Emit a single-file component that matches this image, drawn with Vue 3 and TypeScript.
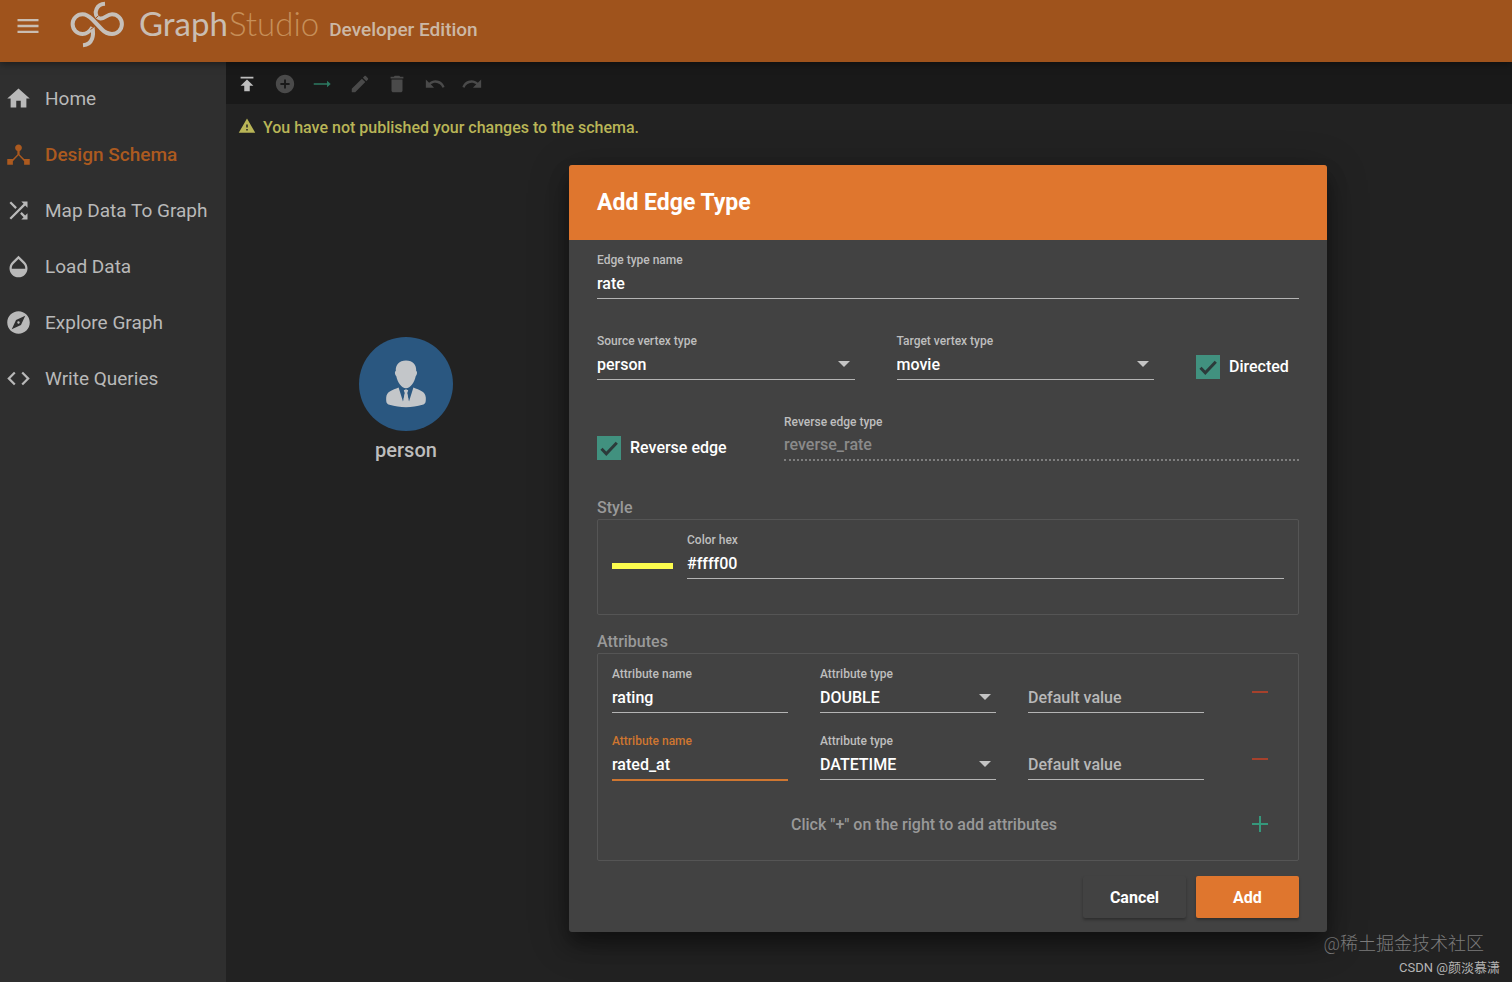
<script setup lang="ts">
import { ref } from 'vue'

interface NavItem {
  label: string
  path: string
}

interface Tool {
  label: string
  path: string
  tone?: 'bright' | 'green'
}

interface Attribute {
  name: string
  type: string
  defaultValue: string
}

const navItems: NavItem[] = [
  { label: 'Home', path: 'M10 20v-6h4v6h5v-8h3L12 3 2 12h3v8z' },
  {
    label: 'Design Schema',
    path: 'M17 16l-4-4V8.82C14.16 8.4 15 7.3 15 6c0-1.66-1.34-3-3-3S9 4.34 9 6c0 1.3.84 2.4 2 2.82V12l-4 4H2v5h5v-3.05l5-5.2 5 5.2V21h5v-5z',
  },
  {
    label: 'Map Data To Graph',
    path: 'M10.59 9.17L5.41 4 4 5.41l5.17 5.17 1.42-1.41zM14.5 4l2.04 2.04L4 18.59 5.41 20 17.96 7.46 20 9.5V4h-5.5zm.33 9.41l-1.41 1.41 3.13 3.13L14.5 20H20v-5.5l-2.04 2.04-3.13-3.13z',
  },
  {
    label: 'Load Data',
    path: 'M17.66 8L12 2.35 6.34 8C4.78 9.56 4 11.64 4 13.64s.78 4.11 2.34 5.67 3.61 2.35 5.66 2.35 4.1-.79 5.66-2.35S20 15.64 20 13.64 19.22 9.56 17.66 8zM6 14c.01-2 .62-3.27 1.76-4.4L12 5.27l4.24 4.38C17.38 10.77 17.99 12 18 14H6z',
  },
  {
    label: 'Explore Graph',
    path: 'M12 10.9c-.61 0-1.1.49-1.1 1.1s.49 1.1 1.1 1.1c.61 0 1.1-.49 1.1-1.1s-.49-1.1-1.1-1.1zM12 2C6.48 2 2 6.48 2 12s4.48 10 10 10 10-4.48 10-10S17.52 2 12 2zm2.19 12.19L6 18l3.81-8.19L18 6l-3.81 8.19z',
  },
  {
    label: 'Write Queries',
    path: 'M9.4 16.6L4.8 12l4.6-4.6L8 6l-6 6 6 6 1.4-1.4zm5.2 0l4.6-4.6-4.6-4.6L16 6l6 6-6 6-1.4-1.4z',
  },
]

const tools: Tool[] = [
  { label: 'Publish schema', tone: 'bright', path: 'M5 4v2h14V4H5zm0 10h4v6h6v-6h4l-7-7-7 7z' },
  {
    label: 'Add vertex type',
    path: 'M12 2C6.48 2 2 6.48 2 12s4.48 10 10 10 10-4.48 10-10S17.52 2 12 2zm5 11h-4v4h-2v-4H7v-2h4V7h2v4h4v2z',
  },
  { label: 'Add edge type', tone: 'green', path: 'M3 11.2h14.5V8.5L21.5 12l-4 3.5v-2.7H3z' },
  {
    label: 'Edit',
    path: 'M3 17.25V21h3.75L17.81 9.94l-3.75-3.75L3 17.25zM20.71 7.04c.39-.39.39-1.02 0-1.41l-2.34-2.34c-.39-.39-1.02-.39-1.41 0l-1.83 1.83 3.75 3.75 1.83-1.83z',
  },
  { label: 'Delete', path: 'M6 19c0 1.1.9 2 2 2h8c1.1 0 2-.9 2-2V7H6v12zM19 4h-3.5l-1-1h-5l-1 1H5v2h14V4z' },
  {
    label: 'Undo',
    path: 'M12.5 8c-2.65 0-5.05.99-6.9 2.6L2 7v9h9l-3.62-3.62c1.39-1.16 3.16-1.88 5.12-1.88 3.54 0 6.55 2.31 7.6 5.5l2.37-.78C21.08 11.03 17.15 8 12.5 8z',
  },
  {
    label: 'Redo',
    path: 'M18.4 10.6C16.55 8.99 14.15 8 11.5 8c-4.65 0-8.58 3.03-9.96 7.22L3.9 16c1.05-3.19 4.05-5.5 7.6-5.5 1.95 0 3.73.72 5.12 1.88L13 16h9V7l-3.6 3.6z',
  },
]

const activeNav = ref('Design Schema')
const edgeName = ref('rate')
const source = ref('person')
const target = ref('movie')
const directed = ref(true)
const reverseEdge = ref(true)
const reverseName = ref('reverse_rate')
const colorHex = ref('#ffff00')
const focusedRow = ref(1)

const vertexTypes = ['person', 'movie']
const attributeTypes = ['DOUBLE', 'DATETIME', 'INT', 'STRING']

const attributes = ref<Attribute[]>([
  { name: 'rating', type: 'DOUBLE', defaultValue: '' },
  { name: 'rated_at', type: 'DATETIME', defaultValue: '' },
])

function addAttribute() {
  attributes.value.push({ name: '', type: 'STRING', defaultValue: '' })
}

function removeAttribute(index: number) {
  attributes.value.splice(index, 1)
}
</script>

<template>
  <div class="app">
    <header class="topbar">
      <button class="icon-button menu" type="button" aria-label="Menu">
        <svg viewBox="0 0 24 24"><path d="M3 18h18v-2H3v2zm0-5h18v-2H3v2zm0-7v2h18V6H3z" /></svg>
      </button>
      <svg class="logo" viewBox="0 0 68 52" aria-hidden="true">
        <path d="M28.4 27.2C26 31 22.8 34 18.5 34A9.9 9.9 0 1 1 18.5 14.2C22.5 14.2 25.5 16.5 28.5 19.5L37.5 29C40.5 32.2 43.8 34 48 34A9.9 9.9 0 1 0 48 14.2C43 14.2 40.5 19 36.5 18.6C31.5 17.8 30.8 12.5 32.6 8.8C34.2 5.5 37 4 41 3.8" />
        <path d="M28.4 27.2C30 34.5 29 44.6 19 45.2" />
        <path class="logo-gap" d="M26.5 29.5L30.5 26.5M31.2 18.6L34.6 15.6" />
      </svg>
      <div class="brand">
        <span class="brand-main">Graph</span><span class="brand-thin">Studio</span>
        <span class="edition">Developer Edition</span>
      </div>
    </header>

    <div class="workspace">
      <nav class="sidebar">
        <a
          v-for="item in navItems"
          :key="item.label"
          href="#"
          class="nav-item"
          :class="{ active: item.label === activeNav }"
          @click.prevent="activeNav = item.label"
        >
          <svg viewBox="0 0 24 24"><path :d="item.path" /></svg>
          <span>{{ item.label }}</span>
        </a>
      </nav>

      <main class="main">
        <div class="toolbar">
          <div class="tools">
            <button
              v-for="tool in tools"
              :key="tool.label"
              type="button"
              class="icon-button tool"
              :class="tool.tone"
              :aria-label="tool.label"
            >
              <svg viewBox="0 0 24 24"><path :d="tool.path" /></svg>
            </button>
          </div>
        </div>

        <section class="canvas">
          <p class="warning">
            <svg viewBox="0 0 24 24"><path d="M1 21h22L12 2 1 21zm12-3h-2v-2h2v2zm0-4h-2v-4h2v4z" /></svg>
            <span>You have not published your changes to the schema.</span>
          </p>
          <div class="vertex">
            <svg viewBox="0 0 94 94">
              <circle cx="47" cy="47" r="47" fill="#2a5780" />
              <path
                fill="#c3c6c9"
                d="M47 23.500c7 0 10.500 4.300 10.200 10.500 1.300.3 1.100 3.600-.5 5.200-1.300 6.300-5.200 12-9.700 12s-8.400-5.700-9.700-12c-1.600-1.600-1.800-4.900-.5-5.200C36.500 27.800 40 23.500 47 23.500z"
              />
              <path
                fill="#c3c6c9"
                d="M39.600 50.500L44 64.500 45.800 56 44.800 53.200 47 52.200 49.200 53.200 48.200 56 50 64.500 54.400 50.500C60.500 53 66.500 54.500 66.800 60.500C67 65.500 66.500 66.800 63.500 67.800C53 71 41 71 30.500 67.800C27.500 66.800 27 65.500 27.200 60.500C27.500 54.500 33.500 53 39.600 50.500z"
              />
              <path fill="#c3c6c9" d="M45.300 53h3.400l-.7 3 1.300 6L47 66l-2.300-4 1.300-6z" />
            </svg>
            <span>person</span>
          </div>
        </section>
      </main>
    </div>

    <form class="dialog" role="dialog" aria-labelledby="dialog-title" @submit.prevent>
      <h2 id="dialog-title" class="dialog-title">Add Edge Type</h2>

      <div class="dialog-body">
        <div class="field">
          <label for="edge-name">Edge type name</label>
          <input id="edge-name" v-model="edgeName" type="text" />
        </div>

        <div class="row endpoints">
          <div class="field">
            <label for="source-type">Source vertex type</label>
            <div class="select">
              <select id="source-type" v-model="source">
                <option v-for="v in vertexTypes" :key="v">{{ v }}</option>
              </select>
              <svg viewBox="0 0 12 6"><path d="M0 0h12L6 6z" /></svg>
            </div>
          </div>
          <div class="field">
            <label for="target-type">Target vertex type</label>
            <div class="select">
              <select id="target-type" v-model="target">
                <option v-for="v in vertexTypes" :key="v">{{ v }}</option>
              </select>
              <svg viewBox="0 0 12 6"><path d="M0 0h12L6 6z" /></svg>
            </div>
          </div>
          <label class="check">
            <span class="box">
              <input v-model="directed" type="checkbox" />
              <svg v-if="directed" viewBox="0 0 24 24"><path d="M4.500 12.800L9.300 17.800 19.800 6.800" /></svg>
            </span>
            Directed
          </label>
        </div>

        <div class="row reverse">
          <label class="check">
            <span class="box">
              <input v-model="reverseEdge" type="checkbox" />
              <svg v-if="reverseEdge" viewBox="0 0 24 24"><path d="M4.500 12.800L9.300 17.800 19.800 6.800" /></svg>
            </span>
            Reverse edge
          </label>
          <div class="field disabled">
            <label for="reverse-name">Reverse edge type</label>
            <input id="reverse-name" v-model="reverseName" type="text" disabled />
          </div>
        </div>

        <h3 class="group-title first">Style</h3>
        <div class="group style-group">
          <span class="swatch" :style="{ background: colorHex === '#ffff00' ? '#fdfd4e' : colorHex }"></span>
          <div class="field">
            <label for="color-hex">Color hex</label>
            <input id="color-hex" v-model="colorHex" type="text" />
          </div>
        </div>

        <h3 class="group-title">Attributes</h3>
        <div class="group attribute-group">
          <div v-for="(attr, i) in attributes" :key="i" class="attribute">
            <div class="field" :class="{ focused: i === focusedRow }">
              <label :for="`attr-name-${i}`">Attribute name</label>
              <input :id="`attr-name-${i}`" v-model="attr.name" type="text" @focus="focusedRow = i" />
            </div>
            <div class="field">
              <label :for="`attr-type-${i}`">Attribute type</label>
              <div class="select">
                <select :id="`attr-type-${i}`" v-model="attr.type">
                  <option v-for="t in attributeTypes" :key="t">{{ t }}</option>
                </select>
                <svg viewBox="0 0 12 6"><path d="M0 0h12L6 6z" /></svg>
              </div>
            </div>
            <div class="field unlabelled">
              <input v-model="attr.defaultValue" type="text" aria-label="Default value" placeholder="Default value" />
            </div>
            <button class="icon-button remove" type="button" aria-label="Remove attribute" @click="removeAttribute(i)">
              <svg viewBox="0 0 16 16"><path d="M0 8h16" /></svg>
            </button>
          </div>
          <div class="hint-row">
            <span>Click "+" on the right to add attributes</span>
            <button class="icon-button add" type="button" aria-label="Add attribute" @click="addAttribute">
              <svg viewBox="0 0 16 16"><path d="M0 8h16M8 0v16" /></svg>
            </button>
          </div>
        </div>

        <div class="actions">
          <button type="button" class="action">Cancel</button>
          <button type="submit" class="action primary">Add</button>
        </div>
      </div>
    </form>

    <div class="credits">
      <span class="credit-site">@稀土掘金技术社区</span>
      <span class="credit-author">CSDN @颜淡慕潇</span>
    </div>
  </div>
</template>

<style>
body {
  margin: 0;
  background: #222222;
}
</style>

<style scoped>
.app {
  position: relative;
  display: flex;
  flex-direction: column;
  min-height: 100vh;
  overflow: hidden;
  background: #222222;
  color: #fff;
  font-family: Roboto, 'Noto Sans CJK SC', sans-serif;
  font-size: 16px;
  font-weight: 500;
}

.app *,
.app *::before {
  box-sizing: border-box;
}

svg {
  display: block;
  fill: currentColor;
}

.icon-button {
  display: flex;
  align-items: center;
  justify-content: center;
  padding: 0;
  border: 0;
  background: none;
  color: inherit;
  cursor: pointer;
}

/* Top bar */
.topbar {
  position: relative;
  z-index: 1;
  display: flex;
  align-items: center;
  height: 62px;
  padding: 0 14px 10px;
  background: #9f531c;
  color: #c9bdb2;
  box-shadow: 0 1px 8px rgba(0, 0, 0, 0.5);
}

.menu svg {
  width: 28px;
  height: 28px;
}

.logo {
  width: 68px;
  height: 52px;
  margin: 0 7px 0 22px;
  fill: none;
  stroke: #c6c0ba;
  stroke-width: 4;
}

.logo-gap {
  stroke: #9f531c;
  stroke-width: 1;
}

.brand {
  display: flex;
  align-items: baseline;
  font-family: Lato, sans-serif;
  font-size: 33px;
  line-height: 48px;
}

.brand-main {
  font-weight: 400;
}

.brand-thin {
  margin-left: 1px;
  font-weight: 300;
  color: #c68f59;
}

.edition {
  margin-left: 10px;
  font-family: Roboto, sans-serif;
  font-size: 19px;
  font-weight: 500;
  color: #ccb8a5;
}

/* Sidebar */
.workspace {
  display: flex;
  flex: 1;
}

.sidebar {
  flex: none;
  width: 226px;
  padding: 8px 0;
  background: #2f2f2f;
}

.nav-item {
  display: flex;
  align-items: center;
  gap: 13px;
  height: 56px;
  padding-left: 5px;
  color: #b9b9b9;
  font-size: 19px;
  font-weight: 400;
  text-decoration: none;
}

.nav-item svg {
  width: 27px;
  height: 27px;
}

.nav-item.active {
  color: #ac5a1f;
  font-weight: 500;
}

/* Canvas */
.main {
  display: flex;
  flex: 1;
  flex-direction: column;
}

.toolbar {
  height: 42px;
  padding: 11px 10px;
  background: #191919;
}

.tools {
  display: flex;
  justify-content: space-between;
  width: 247px;
}

.tool {
  color: #4a4a4a;
}

.tool svg {
  width: 22px;
  height: 22px;
}

.tool.bright {
  color: #bdbdbd;
}

.tool.green {
  color: #2c7a62;
}

.canvas {
  position: relative;
  flex: 1;
}

.warning {
  display: flex;
  align-items: center;
  gap: 7px;
  margin: 0;
  padding: 12px;
  color: #b9b557;
  line-height: 24px;
}

.warning svg {
  width: 18px;
  height: 18px;
  margin-bottom: 4px;
}

.vertex {
  position: absolute;
  top: 233px;
  left: 133px;
  display: flex;
  flex-direction: column;
  align-items: center;
  gap: 7px;
  color: #bdbdbd;
  font-size: 20px;
  line-height: 24px;
}

.vertex svg {
  width: 94px;
  height: 94px;
}

/* Dialog */
.dialog {
  position: absolute;
  z-index: 2;
  top: 165px;
  right: 185px;
  left: 569px;
  border-radius: 3px;
  overflow: hidden;
  background: #424242;
  box-shadow: 0 12px 18px rgba(0, 0, 0, 0.35), 0 8px 40px rgba(0, 0, 0, 0.3);
}

.dialog-title {
  margin: 0;
  padding: 0 28px;
  background: #df762e;
  font-size: 23px;
  font-weight: 700;
  line-height: 75px;
}

.dialog-body {
  padding: 12px 28px 14px;
}

.row {
  display: grid;
  gap: 42px;
  margin-top: 34px;
}

.endpoints {
  grid-template-columns: 5fr 5fr 2fr;
}

.reverse {
  grid-template-columns: 145px 1fr;
}

.field {
  min-width: 0;
}

.field label {
  display: block;
  color: #bebebe;
  font-size: 12px;
  line-height: 16px;
}

.field.unlabelled {
  padding-top: 16px;
}

input[type='text'],
select {
  display: block;
  width: 100%;
  height: 31px;
  padding: 0;
  border: 0;
  border-bottom: 1px solid #b4b4b4;
  border-radius: 0;
  outline: none;
  background: none;
  color: #fff;
  font: inherit;
  appearance: none;
}

option {
  background: #424242;
}

input::placeholder {
  color: #b8b8b8;
  opacity: 1;
}

.select {
  position: relative;
}

.select svg {
  position: absolute;
  top: 12px;
  right: 5px;
  width: 12px;
  height: 6px;
  color: #c4c4c4;
  pointer-events: none;
}

.disabled input[type='text'] {
  border-bottom: 2px dotted #7e7e7e;
  color: #8a8a8a;
}

.field.focused label {
  color: #cf7630;
}

.focused input[type='text'] {
  border-bottom: 2px solid #cf7630;
  margin-bottom: -1px;
  height: 32px;
}

.check {
  display: flex;
  align-items: center;
  gap: 9px;
  height: 47px;
  padding-top: 21px;
  line-height: 24px;
  white-space: nowrap;
}

.box {
  position: relative;
  flex: none;
  width: 24px;
  height: 24px;
}

.box input {
  display: block;
  width: 24px;
  height: 24px;
  margin: 0;
  border: 2px solid #b4b4b4;
  background: none;
  appearance: none;
}

.box input:checked {
  border-color: #41917f;
  background: #41917f;
}

.box svg {
  position: absolute;
  inset: 0;
  fill: none;
  stroke: #2c3a3a;
  stroke-width: 3;
  pointer-events: none;
}

.group-title {
  margin: 16px 0 0;
  color: #999999;
  font-size: 16px;
  font-weight: 500;
  line-height: 22px;
}

.group-title.first {
  margin-top: 36px;
}

.group {
  padding: 12px 14px;
  border: 1px solid #555555;
  border-radius: 2px;
}

.style-group {
  display: flex;
  gap: 14px;
  min-height: 96px;
}

.style-group .field {
  flex: 1;
}

.swatch {
  width: 61px;
  height: 6px;
  margin-top: 31px;
}

.attribute-group {
  display: flex;
  flex-direction: column;
  gap: 15px;
}

.attribute {
  display: grid;
  grid-template-columns: 1fr 1fr 1fr 48px;
  align-items: start;
  column-gap: 32px;
}

.attribute .icon-button {
  width: 48px;
  height: 52px;
}

.hint-row {
  display: grid;
  grid-template-columns: 1fr 48px;
  align-items: center;
  color: #999999;
  text-align: center;
}

.hint-row .icon-button {
  width: 48px;
  height: 48px;
}

.remove svg,
.add svg {
  width: 16px;
  height: 16px;
  stroke: currentColor;
  stroke-width: 2;
}

.remove {
  color: #a6412c;
}

.add {
  color: #35977b;
}

.actions {
  display: flex;
  justify-content: flex-end;
  gap: 10px;
  margin-top: 15px;
}

.action {
  width: 103px;
  height: 42px;
  padding: 0;
  border: 0;
  border-radius: 2px;
  background: #424242;
  color: #fff;
  font: inherit;
  font-weight: 700;
  box-shadow: 0 2px 3px rgba(0, 0, 0, 0.3);
  cursor: pointer;
}

.action.primary {
  background: #df762e;
}

/* Credits */
.credits {
  position: absolute;
  right: 12px;
  bottom: 4px;
  display: flex;
  flex-direction: column;
  align-items: flex-end;
}

.credit-site {
  margin-right: 16px;
  color: #7c7c7c;
  font-size: 18px;
  font-weight: 300;
  line-height: 28px;
}

.credit-author {
  color: #b5b5b5;
  font-size: 13px;
  font-weight: 400;
  line-height: 20px;
}
</style>
